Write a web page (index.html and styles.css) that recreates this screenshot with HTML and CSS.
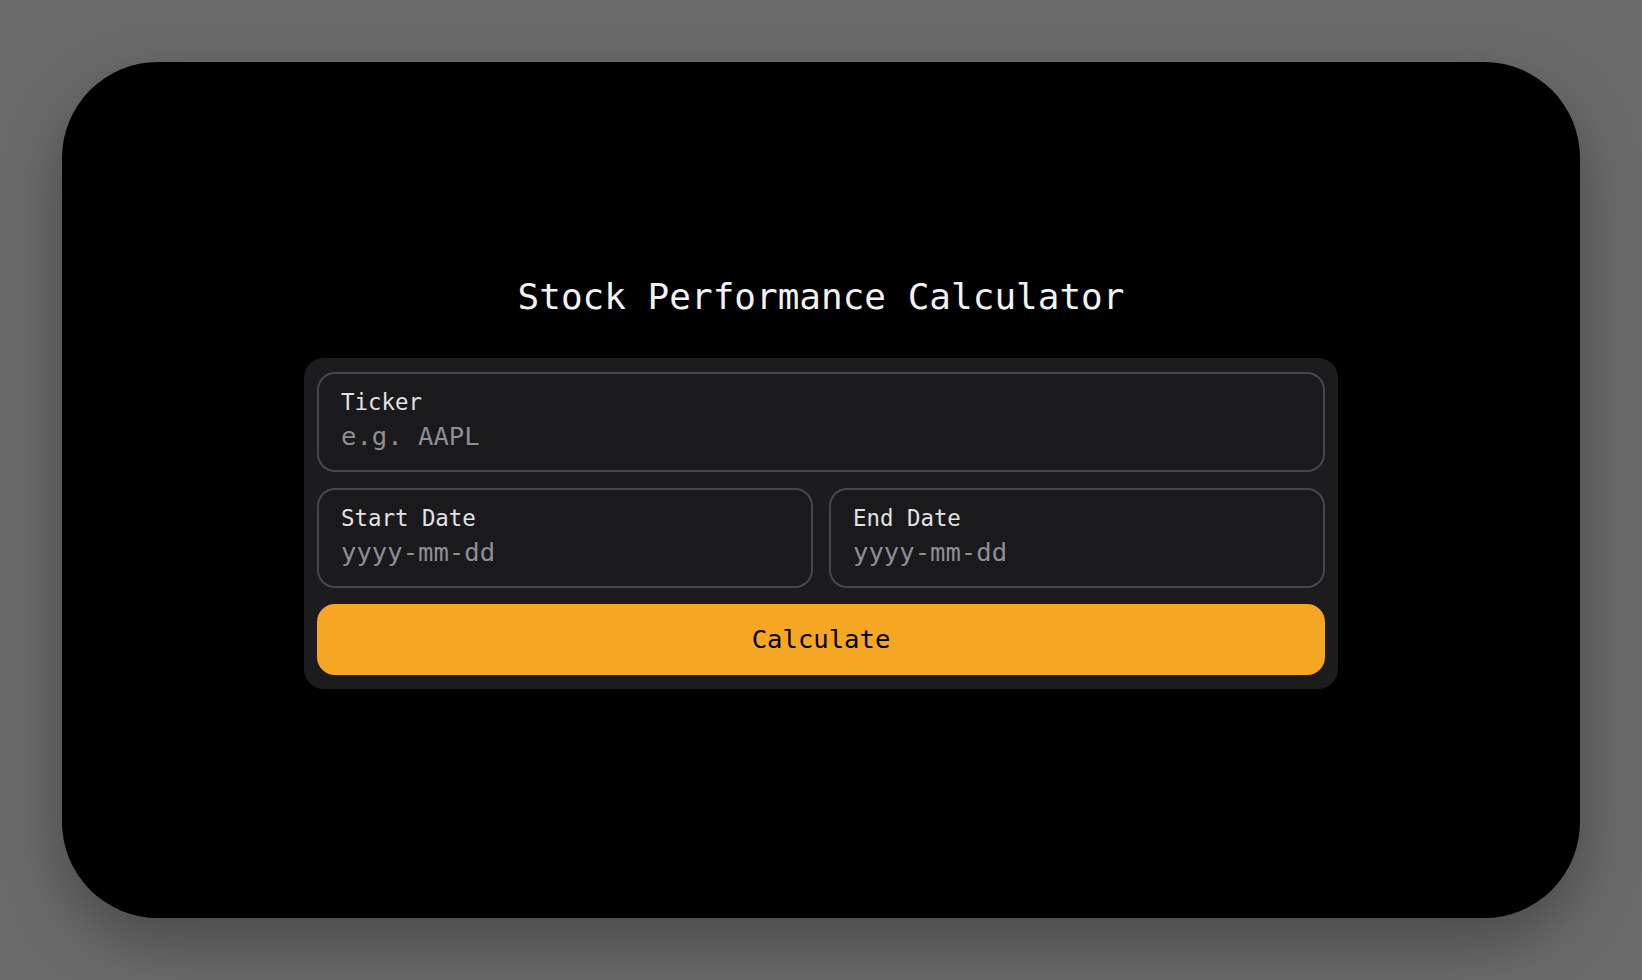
FILE: index.html
```html
<!DOCTYPE html>
<html lang="en">
<head>
<meta charset="utf-8">
<title>Stock Performance Calculator</title>
<link rel="stylesheet" href="styles.css">
</head>
<body>
<div class="stage">
  <main class="card">
    <h1 class="title">Stock Performance Calculator</h1>
    <form class="panel">
      <label class="field">
        <span class="field-label">Ticker</span>
        <input class="field-input" type="text" placeholder="e.g. AAPL">
      </label>
      <div class="row">
        <label class="field">
          <span class="field-label">Start Date</span>
          <input class="field-input" type="text" placeholder="yyyy-mm-dd">
        </label>
        <label class="field">
          <span class="field-label">End Date</span>
          <input class="field-input" type="text" placeholder="yyyy-mm-dd">
        </label>
      </div>
      <button class="btn" type="button">Calculate</button>
    </form>
  </main>
</div>
</body>
</html>
```

FILE: styles.css
```css
* { box-sizing: border-box; }
html, body { margin: 0; padding: 0; }
body {
  background: #6b6b6b;
  font-family: "DejaVu Sans Mono", "Liberation Mono", monospace;
  height: 980px;
  overflow: hidden;
}
.stage {
  height: 980px;
  padding: 62px;
}
.card {
  height: 856px;
  background: #000;
  border-radius: 96px;
  box-shadow: 0 24px 64px rgba(0, 0, 0, 0.32);
  display: flex;
  flex-direction: column;
  align-items: center;
  justify-content: center;
  padding-bottom: 16px;
}
.title {
  margin: 0 0 40px;
  font-size: 36px;
  font-weight: normal;
  line-height: 42px;
  color: #f2f2f2;
}
.panel {
  width: 1034px;
  background: #1c1c1e;
  border-radius: 20px;
  padding: 14px 13px;
  display: flex;
  flex-direction: column;
  gap: 16px;
}
.row {
  display: grid;
  grid-template-columns: 1fr 1fr;
  gap: 16px;
}
.field {
  display: flex;
  flex-direction: column;
  height: 100px;
  border: 2px solid #48484c;
  border-radius: 18px;
  background: #1a1a1c;
  padding: 15px 22px 0;
}
.field-label {
  font-size: 22.4px;
  line-height: 26px;
  color: #e2e2e4;
}
.field-input {
  margin-top: 6px;
  background: transparent;
  border: 0;
  outline: none;
  padding: 0;
  font-family: inherit;
  font-size: 25.6px;
  line-height: 30px;
  height: 30px;
  color: #e6e6e6;
}
.field-input::placeholder {
  color: #8e8e93;
  opacity: 1;
}
.btn {
  height: 71px;
  border: 0;
  border-radius: 18px;
  background: #f5a623;
  color: #000;
  font-family: inherit;
  font-size: 25.6px;
  cursor: pointer;
  padding: 0;
}
```
